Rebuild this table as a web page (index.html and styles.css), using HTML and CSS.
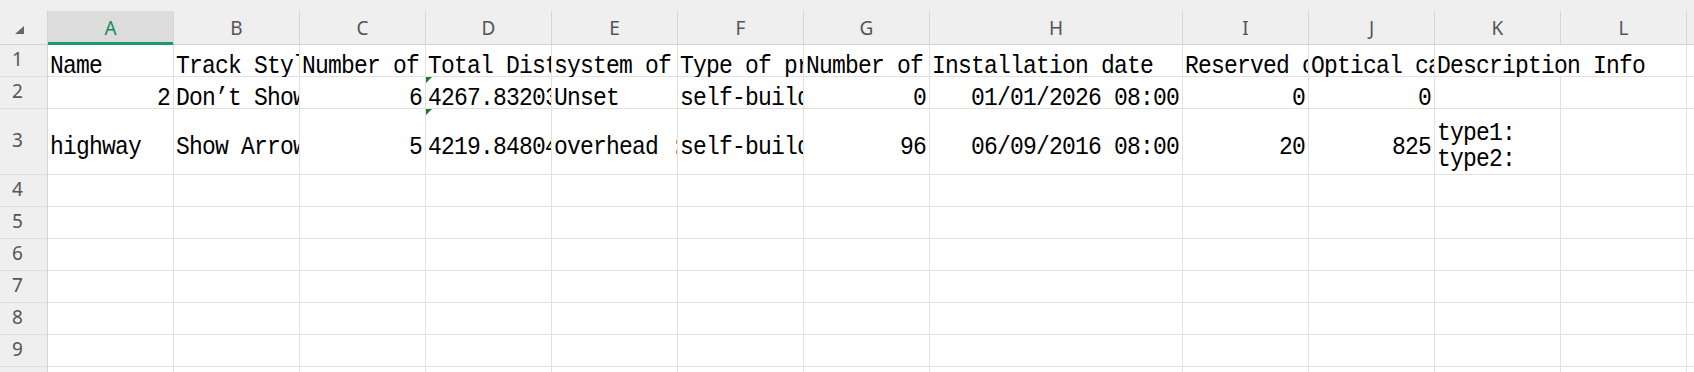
FILE: index.html
```html
<!DOCTYPE html>
<html lang="en">
<head>
<meta charset="utf-8">
<title>Sheet</title>
<link rel="stylesheet" href="styles.css">
</head>
<body>
<div class="sheet">
  <div class="topbar"></div>
  <div class="grid">
    <!-- column headers -->
    <div class="corner">
      <svg class="select-all" width="9" height="8" viewBox="0 0 9 8"><polygon points="9,0 9,8 0,8" fill="#666"/></svg>
    </div>
    <div class="ch active">A</div>
    <div class="ch">B</div>
    <div class="ch">C</div>
    <div class="ch">D</div>
    <div class="ch">E</div>
    <div class="ch">F</div>
    <div class="ch">G</div>
    <div class="ch">H</div>
    <div class="ch">I</div>
    <div class="ch">J</div>
    <div class="ch">K</div>
    <div class="ch">L</div>
    <div class="ch">M</div>

    <!-- row 1 -->
    <div class="rh">1</div>
    <div class="c"><span class="t">Name</span></div>
    <div class="c"><span class="t">Track Style</span></div>
    <div class="c"><span class="t">Number of points</span></div>
    <div class="c"><span class="t">Total Distance</span></div>
    <div class="c"><span class="t">system of laying</span></div>
    <div class="c"><span class="t">Type of property</span></div>
    <div class="c"><span class="t">Number of cores</span></div>
    <div class="c"><span class="t">Installation date</span></div>
    <div class="c"><span class="t">Reserved cores</span></div>
    <div class="c"><span class="t">Optical cable</span></div>
    <div class="c wide"><span class="t">Description Info</span></div>
    <div class="c"></div>

    <!-- row 2 -->
    <div class="rh">2</div>
    <div class="c num"><span class="t">2</span></div>
    <div class="c"><span class="t">Don’t Show</span></div>
    <div class="c num"><span class="t">6</span></div>
    <div class="c flag"><span class="t">4267.832031</span></div>
    <div class="c"><span class="t">Unset</span></div>
    <div class="c"><span class="t">self-build</span></div>
    <div class="c num"><span class="t">0</span></div>
    <div class="c num"><span class="t">01/01/2026 08:00</span></div>
    <div class="c num"><span class="t">0</span></div>
    <div class="c num"><span class="t">0</span></div>
    <div class="c"></div>
    <div class="c"></div>
    <div class="c"></div>

    <!-- row 3 -->
    <div class="rh tall">3</div>
    <div class="c"><span class="t">highway</span></div>
    <div class="c"><span class="t">Show Arrow</span></div>
    <div class="c num"><span class="t">5</span></div>
    <div class="c flag"><span class="t">4219.848047</span></div>
    <div class="c"><span class="t">overhead :</span></div>
    <div class="c"><span class="t">self-build</span></div>
    <div class="c num"><span class="t">96</span></div>
    <div class="c num"><span class="t">06/09/2016 08:00</span></div>
    <div class="c num"><span class="t">20</span></div>
    <div class="c num"><span class="t">825</span></div>
    <div class="c multi"><span class="t">type1:<br>type2:</span></div>
    <div class="c"></div>
    <div class="c"></div>

    <!-- rows 4-10 -->
    <div class="rh">4</div>
    <div class="c"></div><div class="c"></div><div class="c"></div><div class="c"></div><div class="c"></div><div class="c"></div><div class="c"></div><div class="c"></div><div class="c"></div><div class="c"></div><div class="c"></div><div class="c"></div><div class="c"></div>
    <div class="rh">5</div>
    <div class="c"></div><div class="c"></div><div class="c"></div><div class="c"></div><div class="c"></div><div class="c"></div><div class="c"></div><div class="c"></div><div class="c"></div><div class="c"></div><div class="c"></div><div class="c"></div><div class="c"></div>
    <div class="rh">6</div>
    <div class="c"></div><div class="c"></div><div class="c"></div><div class="c"></div><div class="c"></div><div class="c"></div><div class="c"></div><div class="c"></div><div class="c"></div><div class="c"></div><div class="c"></div><div class="c"></div><div class="c"></div>
    <div class="rh">7</div>
    <div class="c"></div><div class="c"></div><div class="c"></div><div class="c"></div><div class="c"></div><div class="c"></div><div class="c"></div><div class="c"></div><div class="c"></div><div class="c"></div><div class="c"></div><div class="c"></div><div class="c"></div>
    <div class="rh">8</div>
    <div class="c"></div><div class="c"></div><div class="c"></div><div class="c"></div><div class="c"></div><div class="c"></div><div class="c"></div><div class="c"></div><div class="c"></div><div class="c"></div><div class="c"></div><div class="c"></div><div class="c"></div>
    <div class="rh">9</div>
    <div class="c"></div><div class="c"></div><div class="c"></div><div class="c"></div><div class="c"></div><div class="c"></div><div class="c"></div><div class="c"></div><div class="c"></div><div class="c"></div><div class="c"></div><div class="c"></div><div class="c"></div>
    <div class="rh">10</div>
    <div class="c"></div><div class="c"></div><div class="c"></div><div class="c"></div><div class="c"></div><div class="c"></div><div class="c"></div><div class="c"></div><div class="c"></div><div class="c"></div><div class="c"></div><div class="c"></div><div class="c"></div>
  </div>
</div>
</body>
</html>
```

FILE: styles.css
```css
* {
  box-sizing: border-box;
}

html, body {
  margin: 0;
  padding: 0;
  background: #ffffff;
}

body {
  width: 1694px;
  height: 372px;
  overflow: hidden;
}

.sheet {
  width: 1694px;
  height: 372px;
  overflow: hidden;
  background: #ffffff;
}

.topbar {
  height: 11px;
  background: #efefef;
}

.grid {
  display: grid;
  grid-template-columns: 48px repeat(7, 126px) 253px repeat(4, 126px) 126px;
  grid-template-rows: 34px 32px 32px 66px repeat(7, 32px);
  width: max-content;
}

/* corner select-all */
.corner {
  background: #efefef;
  border-right: 1px solid #d4d4d4;
  border-bottom: 1px solid #d4d4d4;
  display: flex;
  justify-content: center;
  align-items: center;
  padding: 4px 9px 0 0;
}

.select-all {
  display: block;
}

/* column headers */
.ch {
  background: #efefef;
  border-right: 1px solid #d6d6d6;
  border-bottom: 1px solid #d4d4d4;
  display: flex;
  justify-content: center;
  align-items: center;
  padding-top: 1px;
  font-family: "Noto Sans", "Liberation Sans", sans-serif;
  font-size: 19px;
  color: #555555;
}

.ch.active {
  background: #dcdcdc;
  color: #178a5e;
  border-bottom: 1px solid #1a9a68;
  box-shadow: inset 0 -2px 0 #1a9a68;
}

/* row headers */
.rh {
  background: #efefef;
  border-right: 1px solid #d4d4d4;
  border-bottom: 1px solid #dcdcdc;
  display: flex;
  justify-content: center;
  align-items: center;
  padding: 0 12px 3px 0;
  font-family: "Noto Sans", "Liberation Sans", sans-serif;
  font-size: 19px;
  color: #555555;
}

/* cells */
.c {
  position: relative;
  background: #ffffff;
  border-right: 1px solid #e1e1e1;
  border-bottom: 1px solid #e1e1e1;
  display: flex;
  align-items: center;
  padding: 10px 3px 0 2px;
  overflow-x: clip;
  overflow-y: visible;
  white-space: nowrap;
  font-family: "Liberation Mono", "DejaVu Sans Mono", monospace;
  font-size: 23px;
  letter-spacing: -0.8px;
  line-height: 32px;
  color: #000000;
}

.c .t {
  display: block;
  flex: none;
  transform: scaleY(1.1);
}

.c.num {
  justify-content: flex-end;
}

.c.wide {
  grid-column: span 2;
}

.c.multi {
  padding-top: 9px;
  line-height: 22.5px;
}

/* "number stored as text" marker */
.c.flag::before {
  content: "";
  position: absolute;
  left: 0;
  top: 0;
  width: 0;
  height: 0;
  border-top: 6px solid #1f7a2e;
  border-right: 6px solid transparent;
}
```
